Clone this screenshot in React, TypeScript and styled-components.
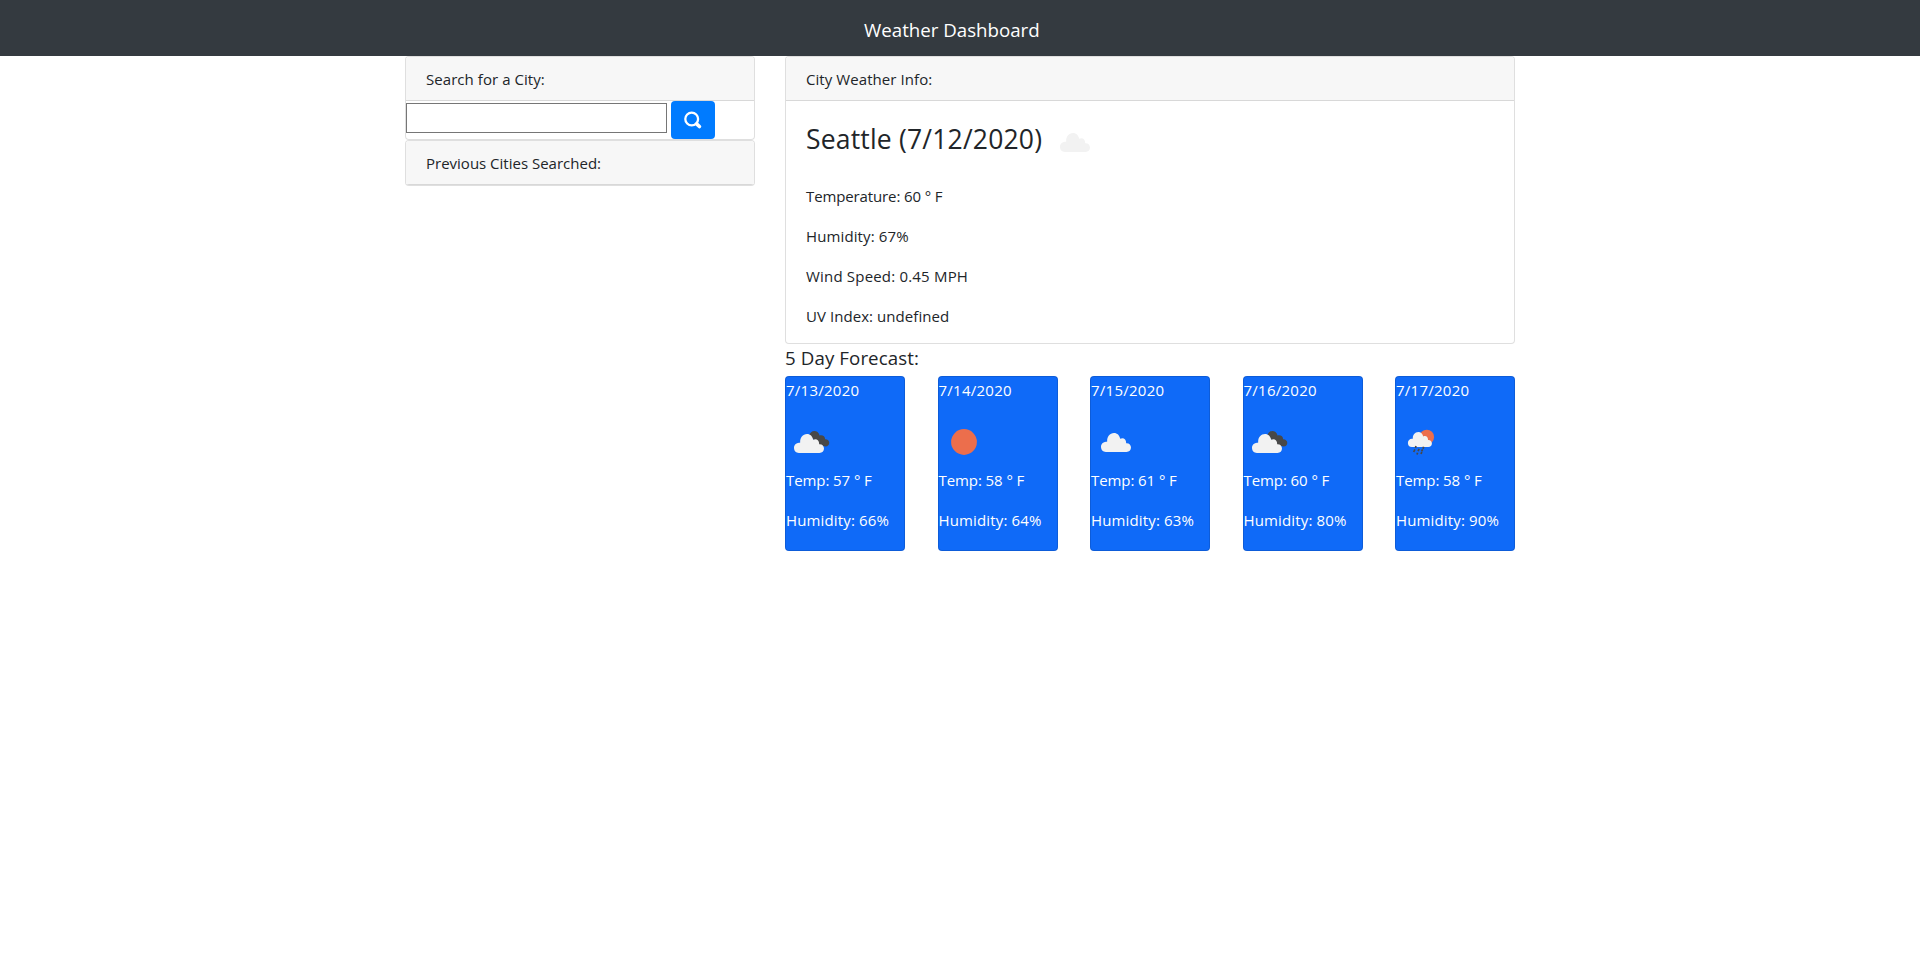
import React from 'react';
import styled, { createGlobalStyle } from 'styled-components';

const GlobalStyle = createGlobalStyle`
  *, *::before, *::after { box-sizing: border-box; }
  body {
    margin: 0;
    background: #fff;
    color: #212529;
    font: 400 15px/24px 'Open Sans', 'Noto Sans', sans-serif;
  }
  p, h1, h2, h3 { margin: 0; font-weight: 400; }
`;

const Text = styled.span<{ $spacing?: number }>`
  display: inline-block;
  white-space: nowrap;
  letter-spacing: ${(p) => p.$spacing ?? 0}px;
`;

const Navbar = styled.header`
  height: 56px;
  padding: 15px 0 0 864px;
  background: #343a40;
  color: #fff;
  font-size: 18.7px;
  line-height: 30px;
`;

const Container = styled.main`
  width: 1110px;
  margin: 0 auto;
  display: grid;
  grid-template-columns: 350px 730px;
  column-gap: 30px;
  align-items: start;
`;

const Column = styled.section`
  display: flex;
  flex-direction: column;
`;

const Card = styled.div<{ $height?: number }>`
  height: ${(p) => (p.$height ? `${p.$height}px` : 'auto')};
  border: 1px solid rgba(0, 0, 0, 0.125);
  border-radius: 4px;
  background: #fff;
  overflow: hidden;
`;

const CardHeader = styled.h2`
  height: 44px;
  padding: 10px 20px 0;
  background: #f7f7f7;
  border-bottom: 1px solid rgba(0, 0, 0, 0.125);
  font-size: 15px;
  line-height: 24px;
`;

const SearchRow = styled.form`
  display: flex;
  align-items: flex-start;
  gap: 4px;
`;

const SearchInput = styled.input`
  width: 261px;
  height: 30px;
  margin: 2px 0 0;
  padding: 1px 2px;
  border: 1px solid #767676;
  border-radius: 0;
  outline: none;
`;

const SearchButton = styled.button`
  width: 44px;
  height: 38px;
  padding: 0;
  border: 0;
  border-radius: 4px;
  background: #007bff;
  display: flex;
  align-items: center;
  justify-content: center;
`;

const CardBody = styled.div`
  padding: 20px;
`;

const CityTitle = styled.h1`
  height: 63px;
  display: flex;
  align-items: flex-start;
  gap: 8px;
  font-size: 26.5px;
  line-height: 36px;

  svg { margin-top: -3px; }
`;

const Reading = styled.p`
  height: 40px;
`;

const ForecastTitle = styled.h2`
  height: 32px;
  padding: 1px 0 0;
  font-size: 18.7px;
  line-height: 26px;
`;

const ForecastRow = styled.div`
  display: flex;
  justify-content: space-between;
`;

const DayCard = styled.article`
  width: 120px;
  height: 175px;
  padding-top: 1px;
  border: 1px solid rgba(0, 0, 0, 0.125);
  border-radius: 4px;
  background: #0f6af8;
  color: #fff;

  svg { display: block; margin: 16px 0 0; }
`;

const CLOUD =
  'M15 34C11.7 34 10 31.6 10 28.8C10 26 12.2 23.8 15 23.7C15.7 23.7 16 23.7 16.2 23.4C15.8 18.8 18.8 15 23 15C26.3 15 28.5 17.3 29.2 20.8C32.2 19.2 35.2 21.1 35.2 25.2C38.2 25 40 27 40 29.6C40 32.2 38.2 34 35.5 34Z';

type Weather = 'cloud' | 'broken' | 'sun' | 'rain';

function WeatherIcon({ kind }: { kind: Weather }) {
  return (
    <svg width="50" height="50" viewBox="0 0 50 50" aria-hidden="true">
      {kind === 'cloud' && <path fill="#f2f2f2" d={CLOUD} />}
      {kind === 'broken' && (
        <>
          <path fill="#484848" d="M23.4 17.6C24.3 11.6 32 11.4 33.6 17.4C36.8 16.7 39 18.3 39.1 21.3C44.6 21.2 44.6 28.4 39.5 28.6L33 27Z" />
          <path fill="#f2f2f2" transform="translate(-2 1)" d={CLOUD} />
        </>
      )}
      {kind === 'sun' && <circle cx="25" cy="24" r="12.9" fill="#ec6e4c" />}
      {kind === 'rain' && (
        <>
          <circle cx="30.8" cy="19" r="7.3" fill="#ec6e4c" />
          <path fill="#f2f2f2" transform="translate(3.9 1.9) scale(.8)" d={CLOUD} />
          <path stroke="#484848" strokeWidth="1.7" d="M20 28l-.6 2M18.9 31.4l-1.2 2.6M23.2 30.8l-1.2 2.4M27.6 28.8l-.5 2M26.6 31.4l-1 2M21.6 34.8l-.6 1.8M25.8 34l-.8 2" />
        </>
      )}
    </svg>
  );
}

const readings = [
  { text: 'Temperature: 60 ° F', spacing: -0.12 },
  { text: 'Humidity: 67%', spacing: 0.12 },
  { text: 'Wind Speed: 0.45 MPH', spacing: 0.19 },
  { text: 'UV Index: undefined', spacing: 0.06 },
];

const days: { date: string; icon: Weather; temp: number; humidity: number }[] = [
  { date: '7/13/2020', icon: 'broken', temp: 57, humidity: 66 },
  { date: '7/14/2020', icon: 'sun', temp: 58, humidity: 64 },
  { date: '7/15/2020', icon: 'cloud', temp: 61, humidity: 63 },
  { date: '7/16/2020', icon: 'broken', temp: 60, humidity: 80 },
  { date: '7/17/2020', icon: 'rain', temp: 58, humidity: 90 },
];

export default function App() {
  return (
    <>
      <GlobalStyle />
      <Navbar><Text>Weather Dashboard</Text></Navbar>
      <Container>
        <Column>
          <Card $height={84}>
            <CardHeader><Text $spacing={0.06}>Search for a City:</Text></CardHeader>
            <SearchRow>
              <SearchInput aria-label="City" />
              <SearchButton type="button" aria-label="Search">
                <svg width="18" height="18" viewBox="0 0 18 18" fill="none" stroke="#fff">
                  <circle cx="7.7" cy="8" r="6.4" strokeWidth="2.3" />
                  <path d="M12.6 12.9l2.8 2.6" strokeWidth="3.6" strokeLinecap="round" />
                </svg>
              </SearchButton>
            </SearchRow>
          </Card>
          <Card $height={46}>
            <CardHeader><Text>Previous Cities Searched:</Text></CardHeader>
          </Card>
        </Column>
        <Column>
          <Card $height={288}>
            <CardHeader><Text $spacing={0.07}>City Weather Info:</Text></CardHeader>
            <CardBody>
              <CityTitle>
                <Text $spacing={0.19}>Seattle (7/12/2020)</Text>
                <WeatherIcon kind="cloud" />
              </CityTitle>
              {readings.map((r) => (
                <Reading key={r.text}><Text $spacing={r.spacing}>{r.text}</Text></Reading>
              ))}
            </CardBody>
          </Card>
          <ForecastTitle><Text $spacing={0.1}>5 Day Forecast:</Text></ForecastTitle>
          <ForecastRow>
            {days.map((d) => (
              <DayCard key={d.date}>
                <p><Text $spacing={0.25}>{d.date}</Text></p>
                <WeatherIcon kind={d.icon} />
                <Reading><Text $spacing={-0.08}>Temp: {d.temp} ° F</Text></Reading>
                <Reading><Text $spacing={0.14}>Humidity: {d.humidity}%</Text></Reading>
              </DayCard>
            ))}
          </ForecastRow>
        </Column>
      </Container>
    </>
  );
}
